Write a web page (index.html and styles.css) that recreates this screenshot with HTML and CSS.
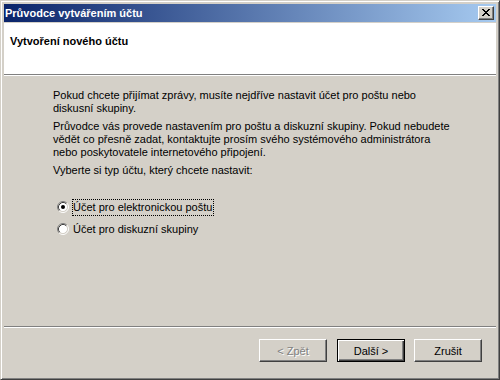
FILE: index.html
```html
<!DOCTYPE html>
<html lang="cs">
<head>
  <meta charset="UTF-8">
  <title>Průvodce vytvářením účtu</title>
  <link rel="stylesheet" href="styles.css">
</head>
<body>

  <div class="window">
    <div class="titlebar">
      <span class="title">Průvodce vytvářením účtu</span>
      <button class="close" type="button" aria-label="Zavřít">
        <svg width="8" height="7" viewBox="0 0 8 7" shape-rendering="crispEdges">
          <path d="M0 0h2v1H0zM6 0h2v1H6zM1 1h2v1H1zM5 1h2v1H5zM2 2h4v1H2zM3 3h2v1H3zM2 4h4v1H2zM1 5h2v1H1zM5 5h2v1H5zM0 6h2v1H0zM6 6h2v1H6z" fill="#000"/>
        </svg>
      </button>
    </div>

    <div class="header">
      <h1>Vytvoření nového účtu</h1>
    </div>

    <div class="content">
      <div class="intro">
        <p>Pokud chcete přijímat zprávy, musíte nejdříve nastavit účet pro poštu nebo<br>diskusní skupiny.</p>
        <p>Průvodce vás provede nastavením pro poštu a diskuzní skupiny. Pokud nebudete<br>vědět co přesně zadat, kontaktujte prosím svého systémového administrátora<br>nebo poskytovatele internetového připojení.</p>
        <p>Vyberte si typ účtu, který chcete nastavit:</p>
      </div>

      <div class="options">
        <label class="option">
          <svg class="radio" width="12" height="12" viewBox="0 0 12 12">
            <circle cx="6" cy="6" r="4.5" fill="#fff"/>
            <path d="M2.11 9.89A5.5 5.5 0 0 1 9.89 2.11" stroke="#808080" fill="none"/>
            <path d="M9.89 2.11A5.5 5.5 0 0 1 2.11 9.89" stroke="#fff" fill="none"/>
            <path d="M2.82 9.18A4.5 4.5 0 0 1 9.18 2.82" stroke="#404040" fill="none"/>
            <path d="M9.18 2.82A4.5 4.5 0 0 1 2.82 9.18" stroke="#d4d0c8" fill="none"/>
            <circle cx="6" cy="6" r="2" fill="#000"/>
          </svg>
          <span class="label focused">Účet pro elektronickou poštu</span>
        </label>
        <label class="option">
          <svg class="radio" width="12" height="12" viewBox="0 0 12 12">
            <circle cx="6" cy="6" r="4.5" fill="#fff"/>
            <path d="M2.11 9.89A5.5 5.5 0 0 1 9.89 2.11" stroke="#808080" fill="none"/>
            <path d="M9.89 2.11A5.5 5.5 0 0 1 2.11 9.89" stroke="#fff" fill="none"/>
            <path d="M2.82 9.18A4.5 4.5 0 0 1 9.18 2.82" stroke="#404040" fill="none"/>
            <path d="M9.18 2.82A4.5 4.5 0 0 1 2.82 9.18" stroke="#d4d0c8" fill="none"/>
          </svg>
          <span class="label">Účet pro diskuzní skupiny</span>
        </label>
      </div>
    </div>

    <div class="footer">
      <button class="btn" type="button" disabled>&lt; Zpět</button>
      <button class="btn btn-default" type="button">Další &gt;</button>
      <button class="btn btn-cancel" type="button">Zrušit</button>
    </div>
  </div>

</body>
</html>
```

FILE: styles.css
```css
/* reset */
* { margin:0; padding:0; box-sizing:border-box }
body {
  background:#d4d0c8;
  font:11px "Liberation Sans", Arial, sans-serif;
  color:#000;
}

/* window frame, classic 3d border */
.window {
  width:500px; height:380px;
  display:flex; flex-direction:column;
  background:#d4d0c8;
  border:1px solid;
  border-color:#d4d0c8 #404040 #404040 #d4d0c8;
  box-shadow:inset 1px 1px #fff, inset -1px -1px #808080;
  padding:3px;
}

/* caption */
.titlebar {
  height:18px;
  display:flex; align-items:center; justify-content:space-between;
  padding:0 2px 0 1px;
  background:linear-gradient(to right, #0a246a, #a6caf0);
  color:#fff; font-weight:bold;
}
.close {
  width:16px; height:14px;
  display:flex; align-items:center; justify-content:center;
  background:#d4d0c8;
  border:1px solid;
  border-color:#fff #404040 #404040 #fff;
  box-shadow:inset -1px -1px #808080;
  padding:0 1px 1px 0;
}
.close svg { display:block }

/* white header band */
.header {
  margin-top:1px;
  height:52px;
  background:#fff;
  border-bottom:1px solid #808080;
  box-shadow:0 1px #fff;
  padding:12px 6px 0;
}
.header h1 {
  font-size:11px; font-weight:bold;
  line-height:13px;
}

/* body */
.content {
  flex:1;
  padding:14px 0 0 49px;
}
.intro p {
  line-height:13px;
  white-space:nowrap;
}
.intro p + p { margin-top:5px }

.options {
  margin-top:21px;
  display:flex; flex-direction:column; gap:4px;
}
.option {
  height:18px;
  display:flex; align-items:center;
  padding-left:4px;
}
.radio { display:block; margin-right:3px }
.label {
  line-height:15px;
  border:1px dotted transparent;
  padding:0 1px 0 0;
}
.label.focused { border-color:#000 }

/* bottom buttons */
.footer {
  height:50px;
  display:flex; justify-content:flex-end; align-items:flex-start;
  border-top:1px solid #808080;
  box-shadow:inset 0 1px #fff;
  padding:12px 14px 0 0;
}
.btn {
  width:68px; height:23px;
  font:11px "Liberation Sans", Arial, sans-serif;
  color:#000;
  background:#d4d0c8;
  border:1px solid;
  border-color:#fff #404040 #404040 #fff;
  box-shadow:inset -1px -1px #808080;
}
.btn:disabled {
  color:#808080;
  text-shadow:1px 1px 0 #fff;
}
.btn-default {
  margin-left:10px;
  border:1px solid #000;
  box-shadow:inset 1px 1px #fff, inset -1px -1px #404040, inset -2px -2px #808080;
}
.btn-cancel { margin-left:9px }
```
